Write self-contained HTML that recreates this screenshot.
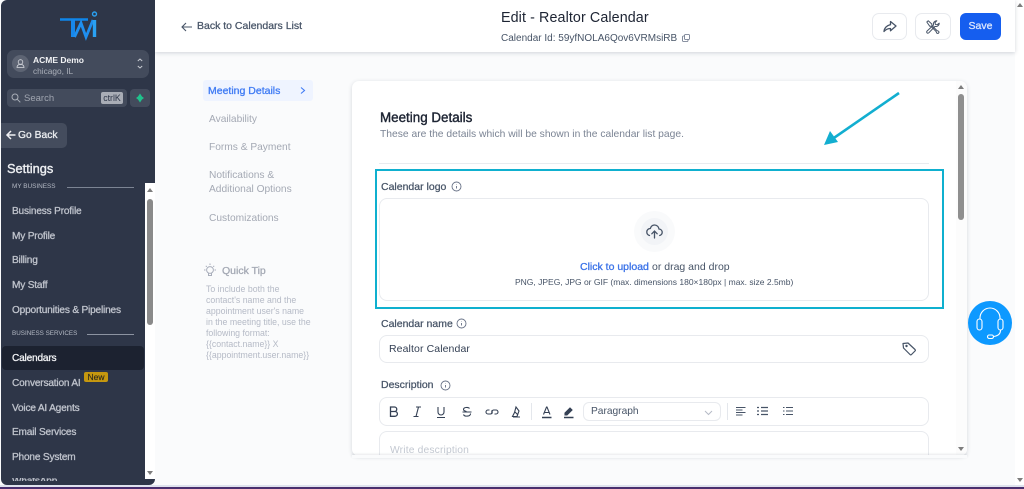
<!DOCTYPE html>
<html><head><meta charset="utf-8"><style>
*{box-sizing:border-box}
html,body{margin:0;padding:0;width:1024px;height:489px;overflow:hidden;background:#fafbfc;font-family:"Liberation Sans",sans-serif}
.a{position:absolute}
.t{position:absolute;white-space:nowrap;line-height:14px}
.m{-webkit-text-stroke:.3px}
.s{font-size:10.1px;color:#bfc3cc;-webkit-text-stroke:.3px;letter-spacing:-.18px}
.n{font-size:10.2px;color:#a4a9b4;letter-spacing:0}
.q{font-size:8.75px;color:#b5bac6;left:206px}
.l{font-size:10.5px;color:#475467;-webkit-text-stroke:.25px;letter-spacing:0}
.b{position:absolute;background:#fff;border:1px solid #e8eaee;border-radius:8px}
svg{position:absolute;overflow:visible}
</style></head><body>

<!-- page -->
<div class="a" style="left:1015px;top:0;width:9px;height:489px;background:#fff"></div>
<div class="a" style="left:1017px;top:3px;border-left:3px solid transparent;border-right:3px solid transparent;border-bottom:4px solid #7d7d7d"></div>
<div class="a" style="left:1017px;top:478px;border-left:3px solid transparent;border-right:3px solid transparent;border-top:4px solid #7d7d7d"></div>

<!-- header -->
<div class="a" style="left:155px;top:0;width:860px;height:52px;background:#fff;box-shadow:0 1px 4px rgba(60,70,90,.22)"></div>
<svg style="left:181px;top:21px" width="12" height="12" viewBox="0 0 12 12" fill="none" stroke="#475467" stroke-width="1.1"><path d="M11 6H1M5 2L1 6l4 4"/></svg>
<div class="t l" style="left:197px;top:19px;color:#475467">Back to Calendars List</div>
<div class="t" style="left:501px;top:11px;font-size:14.3px;color:#1d2433;letter-spacing:.1px">Edit - Realtor Calendar</div>
<div class="t" style="left:501px;top:32px;font-size:10px;color:#475467">Calendar Id: 59yfNOLA6Qov6VRMsiRB</div>
<svg style="left:682px;top:34px" width="8" height="8" viewBox="0 0 8 8" fill="none" stroke="#667085" stroke-width=".8"><rect x="2.5" y=".5" width="5" height="5" rx="1"/><path d="M2.5 2H1.500a1 1 0 0 0-1 1v3.500a1 1 0 0 0 1 1H5a1 1 0 0 0 1-1V5.500"/></svg>

<div class="b" style="left:872px;top:13px;width:35px;height:27px;border-radius:7px"></div>
<svg style="left:883px;top:20px" width="14" height="13" viewBox="0 0 14 13" fill="none" stroke="#475467" stroke-width="1.300" stroke-linejoin="round"><path d="M7.500 1.500l5.500 4.500-5.500 4.800V8.500C5 8.500 3 9.300 1 11.500c.3-3.500 3-6.300 6.500-6.800z"/></svg>
<div class="b" style="left:915px;top:13px;width:36px;height:27px;border-radius:7px"></div>
<svg style="left:926px;top:20px" width="14" height="14" viewBox="0 0 14 14" fill="none" stroke="#475467" stroke-width="1" stroke-linejoin="round"><path d="M.8 2L2.200.8l3.600 3.200v1.400l5.200 5.200 1.700.7.300 1.200-1 1-1.200-.3-.7-1.700L5 6.300H3.800z"/><path d="M13.200 3.200a3.300 3.300 0 0 1-4.200 3.200L2.800 12.800a1.200 1.200 0 0 1-1.800-1.700L7.500 5A3.300 3.300 0 0 1 10.800.8L9 2.700l.4 1.700 1.700.4z"/></svg>
<div class="a m" style="left:960px;top:13px;width:41px;height:27px;background:#155eef;border-radius:6px;color:#dbe6fd;font-size:10.5px;text-align:center;line-height:27px">Save</div>

<!-- left nav -->
<div class="a" style="left:203px;top:80px;width:110px;height:21px;background:#eff4ff;border-radius:3px"></div>
<div class="t m" style="left:208px;top:83.5px;font-size:10.5px;color:#3f7bf4">Meeting Details</div>
<svg style="left:300px;top:87px" width="6" height="7" viewBox="0 0 6 7" fill="none" stroke="#3f7bf4" stroke-width="1.1"><path d="M1 .5l3.500 3-3.500 3"/></svg>
<div class="t n" style="left:209px;top:113px">Availability</div>
<div class="t n" style="left:209px;top:141px">Forms &amp; Payment</div>
<div class="t n" style="left:209px;top:169px">Notifications &amp;</div>
<div class="t n" style="left:209px;top:183px">Additional Options</div>
<div class="t n" style="left:209px;top:212px">Customizations</div>

<svg style="left:203px;top:263px" width="14" height="15" viewBox="0 0 14 15" fill="none" stroke="#a9aebb" stroke-width="1"><circle cx="7" cy="7" r="3.400"/><path d="M5.500 10v2.500h3V10M7 .5V2M1 7h1.500M11.500 7H13M2.800 2.800l1 1M11.200 2.800l-1 1"/></svg>
<div class="t m" style="left:222px;top:264px;font-size:10.5px;color:#a4a9b4">Quick Tip</div>
<div class="t q" style="top:282px">To include both the</div>
<div class="t q" style="top:293px">contact's name and the</div>
<div class="t q" style="top:304px">appointment user's name</div>
<div class="t q" style="top:315px">in the meeting title, use the</div>
<div class="t q" style="top:326px">following format:</div>
<div class="t q" style="top:337px">{{contact.name}} X</div>
<div class="t q" style="top:348px">{{appointment.user.name}}</div>

<!-- card -->
<div class="a" style="left:352px;top:81px;width:615px;height:375px;background:#fff;border-radius:7px;box-shadow:0 1px 4px rgba(60,70,90,.2);overflow:hidden">
  <div class="a" style="left:604px;top:0;width:11px;height:375px;background:#fcfcfc"></div>
  <div class="a" style="left:606px;top:13px;width:6px;height:126px;background:#8f8f8f;border-radius:3px"></div>
  <div class="a" style="left:606px;top:4px;border-left:3px solid transparent;border-right:3px solid transparent;border-bottom:4px solid #7d7d7d"></div>
  <div class="a" style="left:606px;top:366px;border-left:3px solid transparent;border-right:3px solid transparent;border-top:4px solid #7d7d7d"></div>
</div>
<div class="t" style="left:380px;top:111px;font-size:13.4px;color:#1d2433;-webkit-text-stroke:.4px">Meeting Details</div>
<div class="t" style="left:380px;top:128px;font-size:10.3px;color:#7b8494">These are the details which will be shown in the calendar list page.</div>
<div class="a" style="left:379px;top:163px;width:550px;height:1px;background:#e9ebef"></div>

<!-- highlight -->
<div class="a" style="left:375px;top:169px;width:569px;height:140px;border:2.7px solid #0fb0cf"></div>
<svg style="left:820px;top:88px" width="84" height="60" viewBox="0 0 84 60" fill="none" stroke="#12aed0" stroke-width="2.600"><path d="M79 5L8 54"/><path d="M4 57l6-14 8 11z" fill="#12aed0" stroke="none"/></svg>

<div class="t l" style="left:381px;top:180px">Calendar logo</div>
<svg style="left:451px;top:181px" width="11" height="11" viewBox="0 0 11 11" fill="none" stroke="#667085" stroke-width=".9"><circle cx="5.500" cy="5.500" r="4.500"/><path d="M5.500 5v2.500M5.500 3.400v.4"/></svg>
<div class="b" style="left:379px;top:198px;width:550px;height:103px"></div>
<div class="a" style="left:634px;top:211px;width:41px;height:41px;border-radius:50%;background:#f9fafb"></div>
<div class="a" style="left:641px;top:218px;width:27px;height:27px;border-radius:50%;background:#f2f4f7"></div>
<svg style="left:646px;top:224px" width="17" height="15" viewBox="0 0 17 15" fill="none" stroke="#475467" stroke-width="1.300" stroke-linecap="round"><path d="M3.500 11.500C1.800 11 .8 9.500 .8 8c0-2 1.500-3.500 3.500-3.500C5 2.300 6.700 1 8.500 1c2.400 0 4.300 1.800 4.500 4 1.800.2 3.200 1.600 3.200 3.300 0 1.500-1 2.800-2.500 3.200"/><path d="M8.500 14V7.500M5.800 9.800l2.700-2.700 2.700 2.700"/></svg>
<div class="t m" style="left:580px;top:260px;font-size:10.5px;color:#3a72e8">Click to upload</div>
<div class="t" style="left:652px;top:260px;font-size:10.5px;color:#475467">or drag and drop</div>
<div class="t" style="left:515px;top:275px;font-size:8.5px;color:#475467">PNG, JPEG, JPG or GIF (max. dimensions 180×180px | max. size 2.5mb)</div>

<div class="t l" style="left:381px;top:317px">Calendar name</div>
<svg style="left:456px;top:318px" width="11" height="11" viewBox="0 0 11 11" fill="none" stroke="#667085" stroke-width=".9"><circle cx="5.500" cy="5.500" r="4.500"/><path d="M5.500 5v2.500M5.500 3.400v.4"/></svg>
<div class="b" style="left:379px;top:335px;width:550px;height:28px"></div>
<div class="t" style="left:389px;top:342px;font-size:10.5px;color:#344054;letter-spacing:.1px">Realtor Calendar</div>
<svg style="left:902px;top:342px" width="15" height="14" viewBox="0 0 15 14" fill="none" stroke="#475467" stroke-width="1.200" stroke-linejoin="round"><path d="M1 1.500l5-.5 7 6.500c.5.500.5 1 0 1.500l-3.500 3.500c-.5.500-1 .5-1.500 0L1.500 6z"/><circle cx="4.500" cy="4" r=".6" fill="#475467"/></svg>

<div class="t l" style="left:381px;top:378px">Description</div>
<svg style="left:440px;top:380px" width="11" height="11" viewBox="0 0 11 11" fill="none" stroke="#667085" stroke-width=".9"><circle cx="5.500" cy="5.500" r="4.500"/><path d="M5.500 5v2.500M5.500 3.400v.4"/></svg>
<div class="b" style="left:379px;top:397px;width:550px;height:29px"></div>
<svg style="left:388px;top:405px" width="340" height="14" viewBox="0 0 340 14" fill="none" stroke="#344054" stroke-width="1.100">
<path d="M2.500 2h4a2.200 2.200 0 0 1 0 4.500h-4zM2.500 6.500h4.500a2.400 2.400 0 0 1 0 4.800H2.500z" stroke-width="1.300"/>
<path d="M28 2h5M25.500 11.500h5M30.500 2L28 11.500"/>
<path d="M50 2v5a3 3 0 0 0 6 0V2M49 12.500h8"/>
<g transform="translate(7.500 0)"><path d="M74 3.500c-1-1.500-6-1.500-6 1 0 1 1 1.500 3 2M67 7h9M75 8.500c.5 3-6 3.500-7 1"/></g>
<g transform="translate(11.500 0)"><path d="M90 5h-1.500a2 2 0 0 0 0 4H91a2 2 0 0 0 1-3.500M95 9h1.500a2 2 0 0 0 0-4H94a2 2 0 0 0-1 3.500"/></g>
<g transform="translate(13 0)"><path d="M115 2l3 4-2 5.500h-4.500l2-4zM112 12h7M114 7l3 3"/></g>
<path d="M155.500 9.500l3-7.500h.5l3 7.500M156.500 7.500h4.500"/><path d="M154 12.500h9.500" stroke-width="1.500"/>
<path d="M177 8l5-5 2 2-5 5h-2z" fill="#344054"/><path d="M176 12.500h9.500" stroke-width="1.500"/>
</svg>
<div class="a" style="left:531px;top:403px;width:1px;height:17px;background:#e4e7ec"></div>
<div class="b" style="left:583px;top:402px;width:138px;height:19px;border-radius:6px"></div>
<div class="t" style="left:591px;top:405px;font-size:10.2px;color:#475467">Paragraph</div>
<svg style="left:704px;top:410px" width="9" height="6" viewBox="0 0 9 6" fill="none" stroke="#b6bbc6" stroke-width="1"><path d="M1 1l3.500 3.500L8 1"/></svg>
<div class="a" style="left:727px;top:403px;width:1px;height:17px;background:#e4e7ec"></div>
<svg style="left:736px;top:406px" width="60" height="11" viewBox="0 0 60 11" fill="none" stroke="#475467" stroke-width="1.100">
<path d="M0 1.500h9.500M0 4h6.500M0 6.500h9.500M0 9h6.500"/>
<path d="M25 1.500h7M25 5h7M25 8.500h7M21 1.500h2M21 5h2M21 8.500h2" stroke-width="1.300"/>
<path d="M50 1.500h7M50 5h7M50 8.500h7M47 1.500h1.500M47 5h1.500M47 8.500h1.500" stroke-width="1.100"/>
</svg>
<div class="a" style="left:379px;top:431px;width:550px;height:25px;background:#fff;border:1px solid #e8eaee;border-bottom:none;border-radius:8px 8px 0 0"></div>
<div class="t" style="left:390px;top:442.500px;font-size:10.3px;color:#c3c8d1;letter-spacing:.15px;line-height:15px;height:13px;overflow:hidden">Write description</div>
<div class="a" style="left:352px;top:455px;width:615px;height:3px;background:#fafbfc;box-shadow:0 -1px 2px rgba(60,70,90,.12)"></div>

<!-- support -->
<div class="a" style="left:968px;top:301px;width:44px;height:44px;border-radius:50%;background:#0d99ff"></div>
<svg style="left:976px;top:306px" width="28" height="36" viewBox="0 0 28 36" fill="none" stroke="#fff" stroke-width="1.100"><path d="M4 13V12a10 10 0 0 1 20 0v1"/><rect x="1" y="13" width="5" height="11" rx="2.500"/><rect x="22" y="13" width="5" height="11" rx="2.500"/><path d="M24.500 24c0 4-2.500 6-7 6.500"/><rect x="11.500" y="29" width="6" height="3.500" rx="1.700"/></svg>

<!-- sidebar -->
<div class="a" style="left:1px;top:0;width:154px;height:485px;background:#2e3648;border-radius:6px 0 6px 6px;overflow:hidden">
  <div class="a" style="left:144px;top:183px;width:10px;height:296px;background:#fff"></div>
  <div class="a" style="left:146px;top:199px;width:6px;height:126px;background:#8a8a8a;border-radius:3px"></div>
  <div class="a" style="left:146px;top:188px;border-left:3px solid transparent;border-right:3px solid transparent;border-bottom:4px solid #7d7d7d"></div>
  <div class="a" style="left:146px;top:471px;border-left:3px solid transparent;border-right:3px solid transparent;border-top:4px solid #7d7d7d"></div>
</div>
<!-- logo -->
<svg style="left:58px;top:10px" width="42" height="30" viewBox="0 0 42 30" fill="none">
<path d="M2 9.500H30" stroke="#0f86ea" stroke-width="2.600"/>
<path d="M15 9.500V27" stroke="#1787ea" stroke-width="4"/>
<path d="M16.500 27L23 13l5 14 7-17" stroke="#1f8fef" stroke-width="2.800"/>
<path d="M36.500 10v17" stroke="#2aa1f2" stroke-width="3.400"/>
<circle cx="36.500" cy="4" r="2" stroke="#2aa1f2" stroke-width="1.400"/>
</svg>
<div class="a" style="left:7px;top:50px;width:142px;height:28px;background:#434b5c;border-radius:7px"></div>
<div class="a" style="left:12px;top:55px;width:17px;height:17px;border-radius:50%;background:#5d6473"></div>
<svg style="left:16px;top:59px" width="9" height="9" viewBox="0 0 9 9" fill="none" stroke="#d5d8de" stroke-width=".8"><circle cx="4.500" cy="3" r="2.300"/><path d="M1 8.500h7c0-1.500-1-2.500-2-3H3c-1 .5-2 1.500-2 3z"/></svg>
<div class="t" style="left:33px;top:53px;font-size:8.5px;color:#f2f3f5;font-weight:bold">ACME Demo</div>
<div class="t" style="left:33px;top:64px;font-size:8.3px;color:#a9aeb8">chicago, IL</div>
<svg style="left:137px;top:58px" width="6" height="11" viewBox="0 0 6 11" fill="none" stroke="#c9ccd3" stroke-width="1"><path d="M.8 3L3 1l2.200 2M.8 8L3 10l2.200-2"/></svg>

<div class="a" style="left:7px;top:89px;width:120px;height:18px;background:#434b5c;border-radius:4px"></div>
<svg style="left:11px;top:93px" width="10" height="10" viewBox="0 0 10 10" fill="none" stroke="#a9aeb8" stroke-width="1"><circle cx="4" cy="4" r="3"/><path d="M6.300 6.300L9.300 9.300"/></svg>
<div class="t" style="left:24px;top:91px;font-size:9.5px;line-height:15px;color:#a0a5b0">Search</div>
<div class="a" style="left:101px;top:92px;width:22px;height:12px;background:#a9adb6;border-radius:2px;color:#2e3648;font-size:8.8px;line-height:12px;text-align:center">ctrlK</div>
<div class="a" style="left:130px;top:89px;width:20px;height:18px;background:#434b5c;border-radius:4px"></div>
<svg style="left:135px;top:93px" width="10" height="10" viewBox="0 0 10 10"><path d="M5 .5L7 3.500 9 5 7 6.500 5 9.500 3 6.500 1 5 3 3.500z" fill="#1fc28c"/></svg>

<div class="a" style="left:1px;top:123px;width:66px;height:25px;background:#444c5d;border-radius:0 5px 5px 0"></div>
<svg style="left:6px;top:130px" width="10" height="10" viewBox="0 0 10 10" fill="none" stroke="#f0f1f3" stroke-width="1.500"><path d="M9.500 5H1M5 1L1 5l4 4"/></svg>
<div class="t m" style="left:18px;top:129px;font-size:10.3px;color:#eceef1">Go Back</div>
<div class="t" style="left:7px;top:161px;font-size:12.8px;color:#eceef1;-webkit-text-stroke:.4px;line-height:15px">Settings</div>

<div class="t" style="left:12px;top:180px;font-size:6.4px;color:#b4b9c4">MY BUSINESS</div>
<div class="a" style="left:67px;top:187px;width:67px;height:1px;background:#7c8493"></div>
<div class="t s" style="left:12px;top:205px">Business Profile</div>
<div class="t s" style="left:12px;top:230px">My Profile</div>
<div class="t s" style="left:12px;top:254px">Billing</div>
<div class="t s" style="left:12px;top:279px">My Staff</div>
<div class="t s" style="left:12px;top:304px">Opportunities &amp; Pipelines</div>
<div class="t" style="left:12px;top:327px;font-size:6.3px;color:#b4b9c4">BUSINESS SERVICES</div>
<div class="a" style="left:87px;top:334px;width:47px;height:1px;background:#8c93a1"></div>
<div class="a" style="left:2px;top:346px;width:142px;height:24px;background:#1c2230;border-radius:4px"></div>
<div class="t s" style="left:12px;top:352px;color:#f2f3f5">Calendars</div>
<div class="t s" style="left:12px;top:377px">Conversation AI</div>
<div class="a" style="left:84px;top:372px;width:24px;height:10px;background:#c6980f;border-radius:2px;color:#2e2a1c;font-size:8.5px;line-height:10px;text-align:center;-webkit-text-stroke:.15px">New</div>
<div class="t s" style="left:12px;top:402px">Voice AI Agents</div>
<div class="t s" style="left:12px;top:426px">Email Services</div>
<div class="t s" style="left:12px;top:451px">Phone System</div>
<div class="a" style="left:12px;top:478px;width:120px;height:3px;overflow:hidden"><div class="t s" style="left:0;top:-3px">WhatsApp</div></div>

<!-- bottom bar -->
<div class="a" style="left:0;top:485px;width:1024px;height:2px;background:#dfe3ee"></div>
<div class="a" style="left:0;top:487px;width:1024px;height:2px;background:#4a2f6e"></div>
</body></html>
